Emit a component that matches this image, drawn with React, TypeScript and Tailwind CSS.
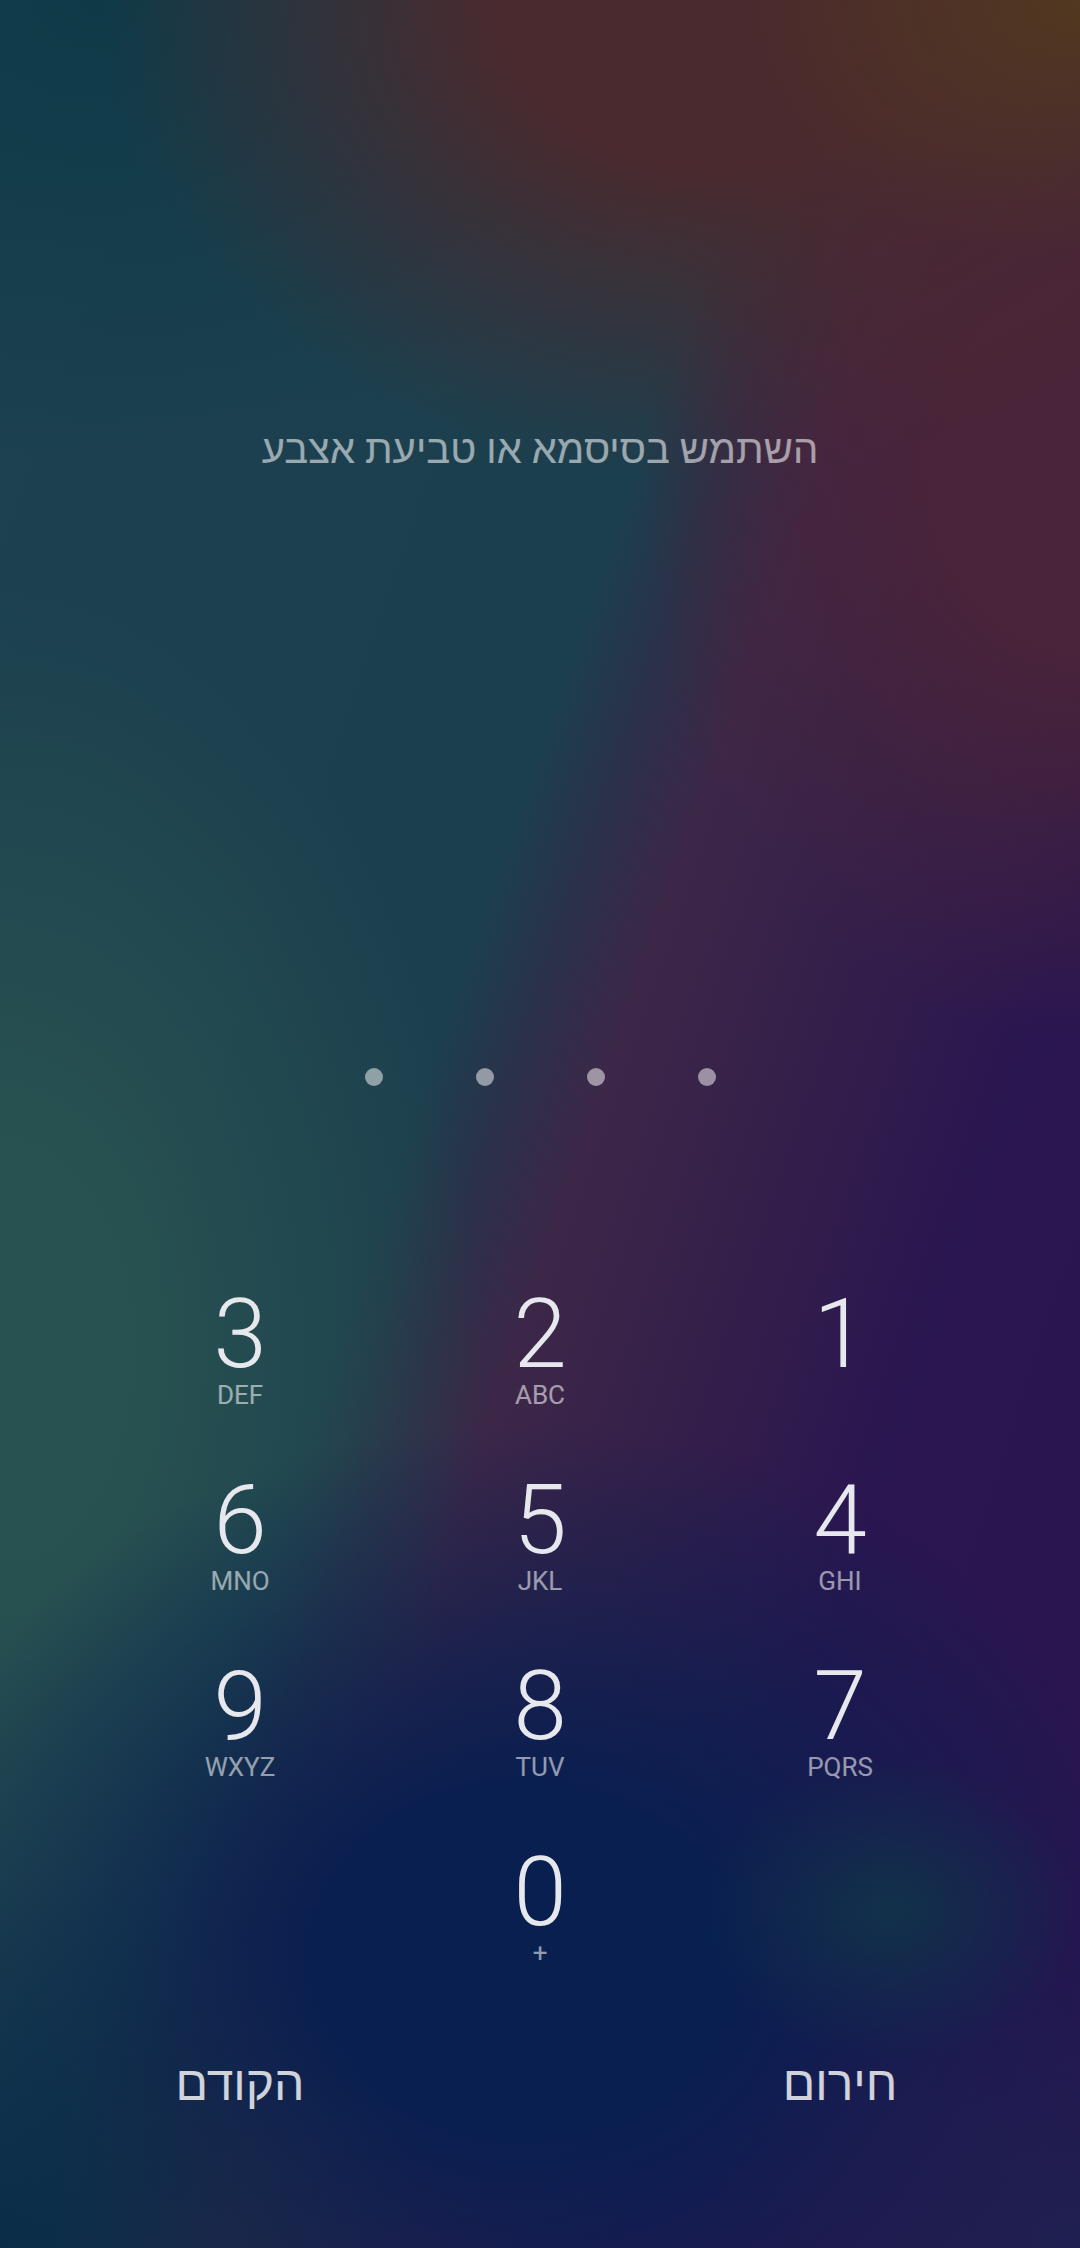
const keys = [
  { d: '1', l: '' },
  { d: '2', l: 'ABC' },
  { d: '3', l: 'DEF' },
  { d: '4', l: 'GHI' },
  { d: '5', l: 'JKL' },
  { d: '6', l: 'MNO' },
  { d: '7', l: 'PQRS' },
  { d: '8', l: 'TUV' },
  { d: '9', l: 'WXYZ' },
]

function Key({ d, l }: { d: string; l: string }) {
  return (
    <div className="flex h-[186px] flex-col items-center pt-[32px]">
      <div className="h-[96px] text-[96px] leading-[96px] font-light text-[#e6e8ee]">{d}</div>
      <div className="h-[26px] text-[26px] leading-[26px] text-white/55">{l}</div>
    </div>
  )
}

export default function App() {
  return (
    <main className="flex h-[2248px] w-[1080px] flex-col items-center overflow-hidden font-['Roboto','Liberation_Sans',sans-serif] bg-[image:radial-gradient(ellipse_190px_150px_at_890px_1910px,#12314a,transparent),radial-gradient(ellipse_380px_300px_at_1080px_2248px,#1e2050,transparent),radial-gradient(ellipse_420px_380px_at_0px_2248px,#0a2c48,transparent),radial-gradient(ellipse_640px_540px_at_520px_1960px,#081f50_0%,#081f50_30%,transparent_100%),radial-gradient(ellipse_340px_260px_at_1080px_0px,#52381f,transparent),radial-gradient(ellipse_620px_480px_at_720px_0px,#4a2a2e_0%,#4a2a2e_35%,transparent_100%),radial-gradient(ellipse_440px_580px_at_1080px_460px,#4a2439_0%,#4a2439_30%,transparent_100%),radial-gradient(ellipse_480px_760px_at_0px_1350px,#285251_0%,#285251_25%,transparent_100%),radial-gradient(ellipse_620px_460px_at_100px_0px,#0e3a48,transparent),linear-gradient(109deg,#1c4150_0%,#1c3f4e_43%,#2c3049_48%,#3d2748_53%,#35204a_62%,#2a1650_75%,#2a1450_100%)]">
      <div dir="rtl" className="mt-[429px] h-[42px] text-[40px] leading-[42px] text-white/55">
        השתמש בסיסמא או טביעת אצבע
      </div>

      <div className="mt-[597px] flex gap-[93px]">
        <span className="size-[18px] rounded-full bg-white/50" />
        <span className="size-[18px] rounded-full bg-white/50" />
        <span className="size-[18px] rounded-full bg-white/50" />
        <span className="size-[18px] rounded-full bg-white/50" />
      </div>

      <div dir="rtl" className="mt-[168px] grid w-[900px] grid-cols-3">
        {keys.map((k) => (
          <Key key={k.d} d={k.d} l={k.l} />
        ))}
        <div />
        <Key d="0" l="+" />
        <div />
        <div className="flex h-[186px] items-center justify-center pb-[14px] text-[48px] text-white/80">חירום</div>
        <div />
        <div className="flex h-[186px] items-center justify-center pb-[14px] text-[48px] text-white/80">הקודם</div>
      </div>
    </main>
  )
}
